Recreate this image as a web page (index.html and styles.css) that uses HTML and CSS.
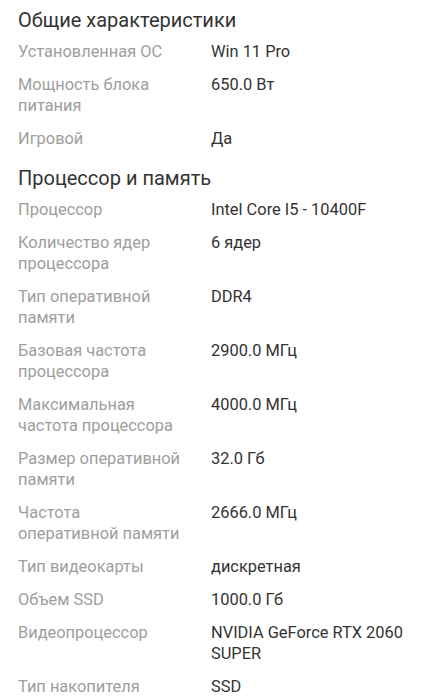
FILE: index.html
```html
<!DOCTYPE html>
<html lang="ru">
<head>
<meta charset="utf-8">
<link rel="stylesheet" href="styles.css">
</head>
<body>
<div class="page">
  <section class="group">
    <h2 class="title">Общие характеристики</h2>
    <dl class="specs">
      <div class="row"><dt>Установленная ОС</dt><dd>Win 11 Pro</dd></div>
      <div class="row"><dt>Мощность блока питания</dt><dd>650.0 Вт</dd></div>
      <div class="row"><dt>Игровой</dt><dd>Да</dd></div>
    </dl>
  </section>
  <section class="group">
    <h2 class="title">Процессор и память</h2>
    <dl class="specs">
      <div class="row"><dt>Процессор</dt><dd>Intel Core I5 - 10400F</dd></div>
      <div class="row"><dt>Количество ядер процессора</dt><dd>6 ядер</dd></div>
      <div class="row"><dt>Тип оперативной памяти</dt><dd>DDR4</dd></div>
      <div class="row"><dt>Базовая частота процессора</dt><dd>2900.0 МГц</dd></div>
      <div class="row"><dt>Максимальная частота процессора</dt><dd>4000.0 МГц</dd></div>
      <div class="row"><dt>Размер оперативной памяти</dt><dd>32.0 Гб</dd></div>
      <div class="row"><dt>Частота оперативной памяти</dt><dd>2666.0 МГц</dd></div>
      <div class="row"><dt>Тип видеокарты</dt><dd>дискретная</dd></div>
      <div class="row"><dt>Объем SSD</dt><dd>1000.0 Гб</dd></div>
      <div class="row"><dt>Видеопроцессор</dt><dd>NVIDIA GeForce RTX 2060 SUPER</dd></div>
      <div class="row"><dt>Тип накопителя</dt><dd>SSD</dd></div>
    </dl>
  </section>
</div>
</body>
</html>
```
FILE: styles.css
```css
html, body {
  margin: 0;
  padding: 0;
  background: #ffffff;
}
body {
  font-family: Roboto, "Noto Sans", sans-serif;
  color: #333333;
}
.page {
  padding: 8px 18px 0 18px;
  display: flex;
  flex-direction: column;
  gap: 17px;
}
.title {
  margin: 0 0 9px 0;
  font-size: 20px;
  line-height: 24px;
  font-weight: 400;
  color: #333333;
}
.specs {
  margin: 0;
  display: flex;
  flex-direction: column;
  gap: 12px;
}
.row {
  display: grid;
  grid-template-columns: 165px 1fr;
  column-gap: 28px;
  font-size: 16.4px;
  line-height: 21px;
}
.row dt {
  color: #9e9e9e;
}
.row dd {
  margin: 0;
  color: #333333;
}
```
